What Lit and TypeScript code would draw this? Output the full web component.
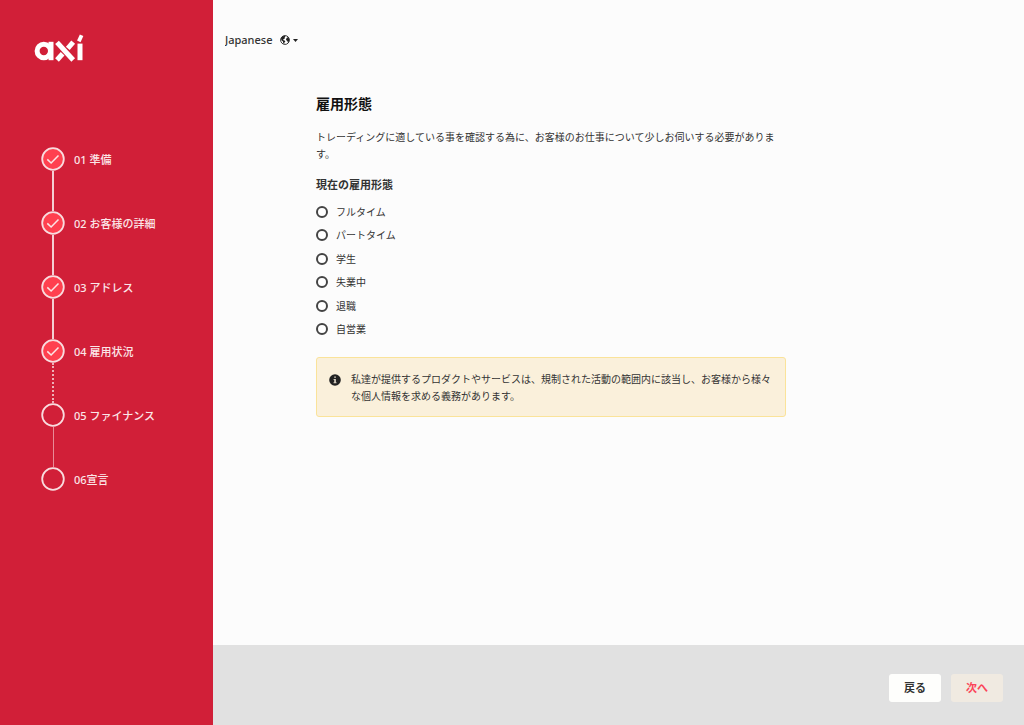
import { LitElement, html, css, svg, nothing } from "lit";
import { customElement, property, state } from "lit/decorators.js";
import { classMap } from "lit/directives/class-map.js";

type Link = "solid" | "dotted" | "thin" | "none";

interface Step {
  label: string;
  done: boolean;
  link: Link;
}

const STEPS: Step[] = [
  { label: "01 準備", done: true, link: "solid" },
  { label: "02 お客様の詳細", done: true, link: "solid" },
  { label: "03 アドレス", done: true, link: "solid" },
  { label: "04 雇用状況", done: true, link: "dotted" },
  { label: "05 ファイナンス", done: false, link: "thin" },
  { label: "06宣言", done: false, link: "none" },
];

const OPTIONS = ["フルタイム", "パートタイム", "学生", "失業中", "退職", "自営業"];

@customElement("step-list")
class StepList extends LitElement {
  @property({ attribute: false }) steps: Step[] = [];

  static styles = css`
    :host {
      display: block;
    }
    .list {
      list-style: none;
      margin: 0;
      padding: 0;
    }
    .step {
      display: grid;
      grid-template-columns: 24px 1fr;
      grid-template-rows: 24px 40px;
      column-gap: 9px;
      align-items: center;
      justify-items: start;
    }
    .mark {
      display: block;
      width: 24px;
      height: 24px;
    }
    .ring {
      fill: none;
      stroke: #f9dcdf;
      stroke-width: 1.8;
    }
    .done .ring {
      fill: #ff404f;
    }
    .tick {
      fill: none;
      stroke: #fbe6e6;
      stroke-width: 1.5;
    }
    .label {
      padding-top: 2px;
      font-size: 11px;
      line-height: 16px;
      font-weight: 500;
      color: #fbe6e8;
      white-space: nowrap;
    }
    .link {
      justify-self: center;
      align-self: stretch;
      width: 0;
      border-left: 2px solid #f5ced3;
    }
    .dotted {
      border-left-style: dotted;
      border-left-color: #eeb0b8;
    }
    .thin {
      border-left: 1px solid #e88b97;
    }
  `;

  render() {
    return html`
      <ol class="list">
        ${this.steps.map(
          (s) => html`
            <li class=${classMap({ step: true, done: s.done })}>
              <svg class="mark" viewBox="0 0 24 24" aria-hidden="true">
                <circle class="ring" cx="12" cy="12" r="10.8" />
                ${s.done ? svg`<path class="tick" d="M6.3 12.4l3.8 3.6 7.4-7.6" />` : nothing}
              </svg>
              <span class="label">${s.label}</span>
              ${s.link === "none"
                ? nothing
                : html`<span class=${classMap({ link: true, [s.link]: true })}></span>`}
            </li>
          `
        )}
      </ol>
    `;
  }
}

@customElement("app-root")
class AppRoot extends LitElement {
  @state() private choice = "";

  static styles = css`
    :host {
      display: flex;
      min-height: 100vh;
      font-family: "Noto Sans", "Noto Sans CJK JP", sans-serif;
      background: #fcfcfc;
      color: #333;
    }
    .side {
      flex: none;
      box-sizing: border-box;
      width: 213px;
      padding: 34px 16px 0 34px;
      background: #d11f38;
    }
    .logo {
      display: block;
      width: 50px;
      height: 28px;
      margin-bottom: 85px;
      fill: none;
      stroke: #fff;
      stroke-width: 5;
    }
    .steps {
      padding-left: 7px;
    }
    .page {
      flex: 1;
      min-width: 0;
      display: flex;
      flex-direction: column;
    }
    .top {
      display: flex;
      padding: 32px 12px 0;
    }
    .lang {
      display: flex;
      align-items: center;
      height: 16px;
    }
    .lang-select {
      appearance: none;
      border: 0;
      margin: 0;
      padding: 0 24px 0 0;
      margin-right: -17px;
      background: none;
      font: 500 11px/16px "Noto Sans", "Noto Sans CJK JP", sans-serif;
      color: #333;
      cursor: pointer;
    }
    .globe {
      width: 10px;
      height: 10px;
      pointer-events: none;
    }
    .caret {
      width: 5px;
      height: 3px;
      margin-left: 3px;
      pointer-events: none;
    }
    .content {
      flex: 1;
      box-sizing: border-box;
      width: 100%;
      max-width: 573px;
      padding: 46px 0 24px 103px;
    }
    .title {
      margin: 0 0 15px;
      font-size: 14px;
      line-height: 20px;
      font-weight: 700;
      color: #111;
    }
    .intro {
      margin: 0 0 14px;
      font-size: 10px;
      line-height: 17px;
    }
    .group {
      border: 0;
      margin: 0 0 16px;
      padding: 0;
      min-width: 0;
    }
    .legend {
      padding: 0;
      margin-bottom: 7px;
      font-size: 11px;
      line-height: 16px;
      font-weight: 700;
    }
    .choices {
      display: grid;
      grid-auto-rows: 1fr;
      height: 141px;
    }
    .choice {
      display: flex;
      align-items: center;
      gap: 8px;
      font-size: 10px;
      line-height: 16px;
      cursor: pointer;
    }
    .radio {
      appearance: none;
      box-sizing: border-box;
      width: 12px;
      height: 12px;
      margin: 0;
      border: 2px solid #444;
      border-radius: 50%;
      background: #fff;
    }
    .radio:checked {
      background: radial-gradient(circle, #444 2px, #fff 3px);
    }
    .note {
      display: flex;
      gap: 10px;
      padding: 13px 11px 11px 12px;
      border: 1px solid #fae39a;
      border-radius: 3px;
      background: #faf0db;
    }
    .info {
      flex: none;
      width: 12px;
      height: 12px;
      margin-top: 3px;
    }
    .note-text {
      margin: 0;
      font-size: 10px;
      line-height: 17px;
    }
    .foot {
      display: flex;
      justify-content: flex-end;
      gap: 10px;
      padding: 29px 21px 23px;
      background: #e1e1e1;
    }
    .btn {
      min-width: 52px;
      height: 28px;
      padding: 0 8px;
      border: 0;
      border-radius: 3px;
      background: #fefefc;
      font: 700 11px/16px "Noto Sans", "Noto Sans CJK JP", sans-serif;
      color: #333;
      cursor: pointer;
    }
    .next {
      background: #f0eae1;
      color: #fb4458;
    }
  `;

  render() {
    return html`
      <aside class="side">
        <svg class="logo" viewBox="0 0 50 28" role="img" aria-label="axi">
          <circle cx="9.8" cy="17" r="6.7" />
          <line x1="17" y1="7.8" x2="17" y2="26.2" />
          <line x1="23" y1="8.4" x2="39.2" y2="26" />
          <line x1="39.2" y1="8.2" x2="33.8" y2="14.4" />
          <line x1="28.6" y1="19.8" x2="23" y2="26" />
          <line x1="46" y1="9.6" x2="46" y2="26.2" />
          <line x1="44.8" y1="7.4" x2="47.6" y2="1.2" stroke-width="3.8" />
        </svg>
        <nav class="steps"><step-list .steps=${STEPS}></step-list></nav>
      </aside>
      <div class="page">
        <header class="top">
          <div class="lang">
            <select class="lang-select" aria-label="Language">
              <option>Japanese</option>
            </select>
            <svg class="globe" viewBox="0 0 10 10" aria-hidden="true">
              <circle cx="5" cy="5" r="4.4" fill="#fff" stroke="#222" stroke-width="0.9" />
              <path
                fill="#222"
                d="M1 3.2L2.4 1.5 4.6.8 5.5 1.6 4.6 2.4 5 3.2 3.6 4.2 3 5.1 4.6 5.4 5.4 6.4 4.4 7.6 4.2 9 3.2 8.2 3 6.6 1.4 5.2zM6.4 3.4L7.2 2.2 8.6 2.8 9.3 4.6 8.8 6.8 7.8 7.4 7.4 5.9 6.3 5.3 6 4.2z"
              />
            </svg>
            <svg class="caret" viewBox="0 0 5 3" aria-hidden="true">
              <path d="M0 0h5L2.5 3z" fill="#222" />
            </svg>
          </div>
        </header>
        <main class="content">
          <h1 class="title">雇用形態</h1>
          <p class="intro">
            トレーディングに適している事を確認する為に、お客様のお仕事について少しお伺いする必要があります。
          </p>
          <fieldset class="group">
            <legend class="legend">現在の雇用形態</legend>
            <div class="choices">
              ${OPTIONS.map(
                (o) => html`
                  <label class="choice">
                    <input
                      class="radio"
                      type="radio"
                      name="employment"
                      .checked=${this.choice === o}
                      @change=${() => (this.choice = o)}
                    />
                    <span>${o}</span>
                  </label>
                `
              )}
            </div>
          </fieldset>
          <div class="note">
            <svg class="info" viewBox="0 0 12 12" aria-hidden="true">
              <circle cx="6" cy="6" r="5.8" fill="#222" />
              <path
                d="M5.2 2.4h1.7v1.4H5.2zM4.6 4.9h2.3v3.3h.6v1.1H4.5V8.2h.7V6h-.6z"
                fill="#d8d0c2"
              />
            </svg>
            <p class="note-text">
              私達が提供するプロダクトやサービスは、規制された活動の範囲内に該当し、お客様から様々な個人情報を求める義務があります。
            </p>
          </div>
        </main>
        <footer class="foot">
          <button class="btn" type="button">戻る</button>
          <button class="btn next" type="button">次へ</button>
        </footer>
      </div>
    `;
  }
}
